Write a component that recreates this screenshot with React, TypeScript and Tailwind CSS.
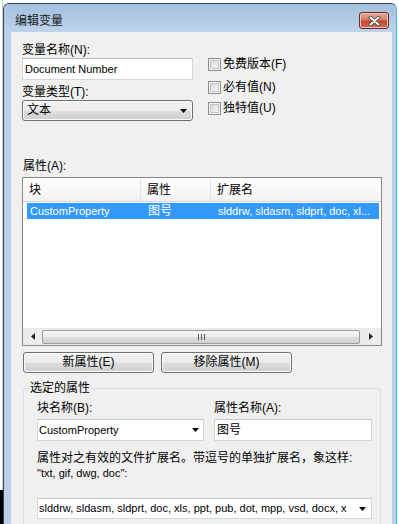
import React from "react";

const FONT = "font-['Liberation_Sans','Noto_Sans_CJK_SC',sans-serif]";

function DownArrow() {
  return (
    <svg width="7" height="4" viewBox="0 0 7 4">
      <path d="M0 0h7L3.5 4z" fill="#000" />
    </svg>
  );
}

function CheckRow({ label, className }: { label: string; className?: string }) {
  return (
    <div className={"flex items-center h-[13px] " + (className ?? "")}>
      <div className="w-[13px] h-[13px] border border-[#8e8f8f] bg-[#f4f4f4] p-[1px]">
        <div className="w-full h-full border border-[#c6c6c6] bg-gradient-to-br from-[#d8d8d8] to-[#f7f7f7]" />
      </div>
      <span className="ml-[2px] leading-[15px]">{label}</span>
    </div>
  );
}

function PushButton({ children }: { children: React.ReactNode }) {
  return (
    <div className="w-[131px] h-[21px] rounded-[3px] border border-[#707070] bg-[linear-gradient(#f2f2f2,#ebebeb_50%,#dddddd_50%,#cfcfcf)] shadow-[inset_0_0_0_1px_#fbfbfb] flex items-center justify-center">
      {children}
    </div>
  );
}

export default function App() {
  return (
    <div className={"w-[399px] h-[524px] overflow-hidden bg-white flex text-black text-[12px] leading-[15px] " + FONT}>
      {/* strip of the window behind */}
      <div className="w-[3px] flex flex-col">
        <div className="h-[490px] bg-white border-r border-[#cfcfcf]" />
        <div className="flex-1 bg-black" />
      </div>

      {/* dialog */}
      <div className="mt-[3px] w-[394px] h-[600px] rounded-t-[6px] border border-[#33445a] border-r-[#3cc0ec] bg-[#bad1ea] flex flex-col">
        {/* title bar */}
        <div className="h-[28px] rounded-t-[5px] bg-gradient-to-b from-[#a5bfdd] to-[#bcd3eb] flex items-start pl-[11px] pr-[7px]">
          <span className="mt-[10px] text-[12px] leading-[15px] text-[#1a1a1a]">编辑变量</span>
          <div className="ml-auto mt-[8px] w-[30px] h-[17px] rounded-[3px] border border-[#6a2a22] bg-[linear-gradient(#e9ab9b,#d77a66_45%,#c2452f_55%,#d36c56)] shadow-[inset_0_0_0_1px_#f0c3b6] flex items-center justify-center">
            <svg width="13" height="10" viewBox="0 0 13 10">
              <path d="M2.5 1.5l8 7M10.5 1.5l-8 7" stroke="#3a3a3a" strokeWidth="3.6" strokeLinecap="round" />
              <path d="M2.5 1.5l8 7M10.5 1.5l-8 7" stroke="#fff" strokeWidth="2" strokeLinecap="round" />
            </svg>
          </div>
        </div>

        <div className="flex flex-1">
          <div className="w-[7px]" />
          {/* client area */}
          <div className="w-[381px] bg-[#f0f0f0] pl-[11px] pt-[11px]">
            <div className="flex">
              <div className="w-[171px] flex flex-col">
                <div>变量名称(N):</div>
                <div className="h-[22px] border border-[#d3d7dc] border-t-[#b4b8be] bg-white pl-[2px] flex items-center text-[11px]">
                  Document Number
                </div>
                <div className="mt-[5px]">变量类型(T):</div>
                <div className="h-[21px] rounded-[3px] border border-[#707070] bg-[linear-gradient(#f2f2f2,#ebebeb_50%,#dddddd_50%,#cfcfcf)] shadow-[inset_0_0_0_1px_#fbfbfb] flex items-center pl-[4px] pr-[5px]">
                  <span>文本</span>
                  <span className="ml-auto flex">
                    <DownArrow />
                  </span>
                </div>
              </div>
              <div className="ml-[15px] pt-[15px] flex flex-col">
                <CheckRow label="免费版本(F)" />
                <CheckRow label="必有值(N)" className="mt-[10px]" />
                <CheckRow label="独特值(U)" className="mt-[8px]" />
              </div>
            </div>

            <div className="mt-[38px] pl-[1px]">属性(A):</div>

            {/* list view */}
            <div className="mt-[3px] w-[360px] h-[169px] border border-[#828790] bg-white flex flex-col">
              <div className="h-[24px] flex border-b border-[#d5d5d5] bg-gradient-to-b from-white to-[#f3f3f3]">
                <div className="w-[118px] pl-[6px] pt-[5px] border-r border-[#e3e3e3]">块</div>
                <div className="w-[70px] pl-[6px] pt-[5px] border-r border-[#e3e3e3]">属性</div>
                <div className="flex-1 pl-[6px] pt-[5px]">扩展名</div>
              </div>
              <div className="flex-1">
                <div className="mt-[1px] ml-[4px] mr-[2px] h-[16px] bg-[#3399ff] text-white flex items-center">
                  <div className="w-[115px] pl-[3px] text-[11px]">CustomProperty</div>
                  <div className="w-[70px] pl-[6px]">图号</div>
                  <div className="flex-1 pl-[6px] text-[11px] whitespace-nowrap">slddrw, sldasm, sldprt, doc, xl...</div>
                </div>
              </div>
              {/* horizontal scrollbar */}
              <div className="h-[17px] bg-[#ececec] flex items-center">
                <div className="w-[19px] flex justify-center">
                  <svg width="4" height="7" viewBox="0 0 4 7">
                    <path d="M4 0v7L0 3.5z" fill="#222" />
                  </svg>
                </div>
                <div className="w-[318px] h-[14px] rounded-[2px] border border-[#9b9b9b] bg-[linear-gradient(#f7f7f7,#ececec_50%,#dcdcdc_50%,#d2d2d2)] flex items-center justify-center gap-[2px]">
                  <div className="w-[1px] h-[6px] bg-[#555]" />
                  <div className="w-[1px] h-[6px] bg-[#555]" />
                  <div className="w-[1px] h-[6px] bg-[#555]" />
                </div>
                <div className="flex-1 flex justify-center">
                  <svg width="4" height="7" viewBox="0 0 4 7">
                    <path d="M0 0v7L4 3.5z" fill="#222" />
                  </svg>
                </div>
              </div>
            </div>

            <div className="mt-[6px] ml-[1px] flex gap-[7px]">
              <PushButton>新属性(E)</PushButton>
              <PushButton>移除属性(M)</PushButton>
            </div>

            {/* group box */}
            <div className="relative mt-[15px] ml-[1px] w-[358px] h-[160px] rounded-[3px] border border-[#d5dfe5] pl-[13px] pt-[12px]">
              <div className="absolute left-[5px] top-[-8px] px-[1px] bg-[#f0f0f0]">选定的属性</div>
              <div className="flex">
                <div className="w-[167px]">
                  <div>块名称(B):</div>
                  <div className="mt-[3px] h-[22px] border border-[#d3d7dc] border-t-[#c4c8ce] bg-white pl-[1px] pr-[4px] flex items-center">
                    <span className="text-[11px]">CustomProperty</span>
                    <span className="ml-auto flex">
                      <DownArrow />
                    </span>
                  </div>
                </div>
                <div className="ml-[10px] w-[158px]">
                  <div>属性名称(A):</div>
                  <div className="mt-[3px] h-[22px] border border-[#d3d7dc] border-t-[#c4c8ce] bg-white pl-[2px] flex items-center">
                    图号
                  </div>
                </div>
              </div>
              <div className="mt-[10px] whitespace-nowrap">属性对之有效的文件扩展名。带逗号的单独扩展名，象这样:</div>
              <div className="text-[11px] leading-[14px]">"txt, gif, dwg, doc":</div>
              <div className="mt-[18px] w-[335px] h-[21px] border border-[#d3d7dc] border-t-[#c4c8ce] bg-white pl-[1px] pr-[5px] flex items-center">
                <span className="whitespace-nowrap text-[11px]">
                  slddrw, sldasm, sldprt, doc, xls, ppt, pub, dot, mpp, vsd, docx, x
                </span>
                <span className="ml-auto flex">
                  <DownArrow />
                </span>
              </div>
            </div>
          </div>
          <div className="w-[3px]" />
        </div>
      </div>
    </div>
  );
}
